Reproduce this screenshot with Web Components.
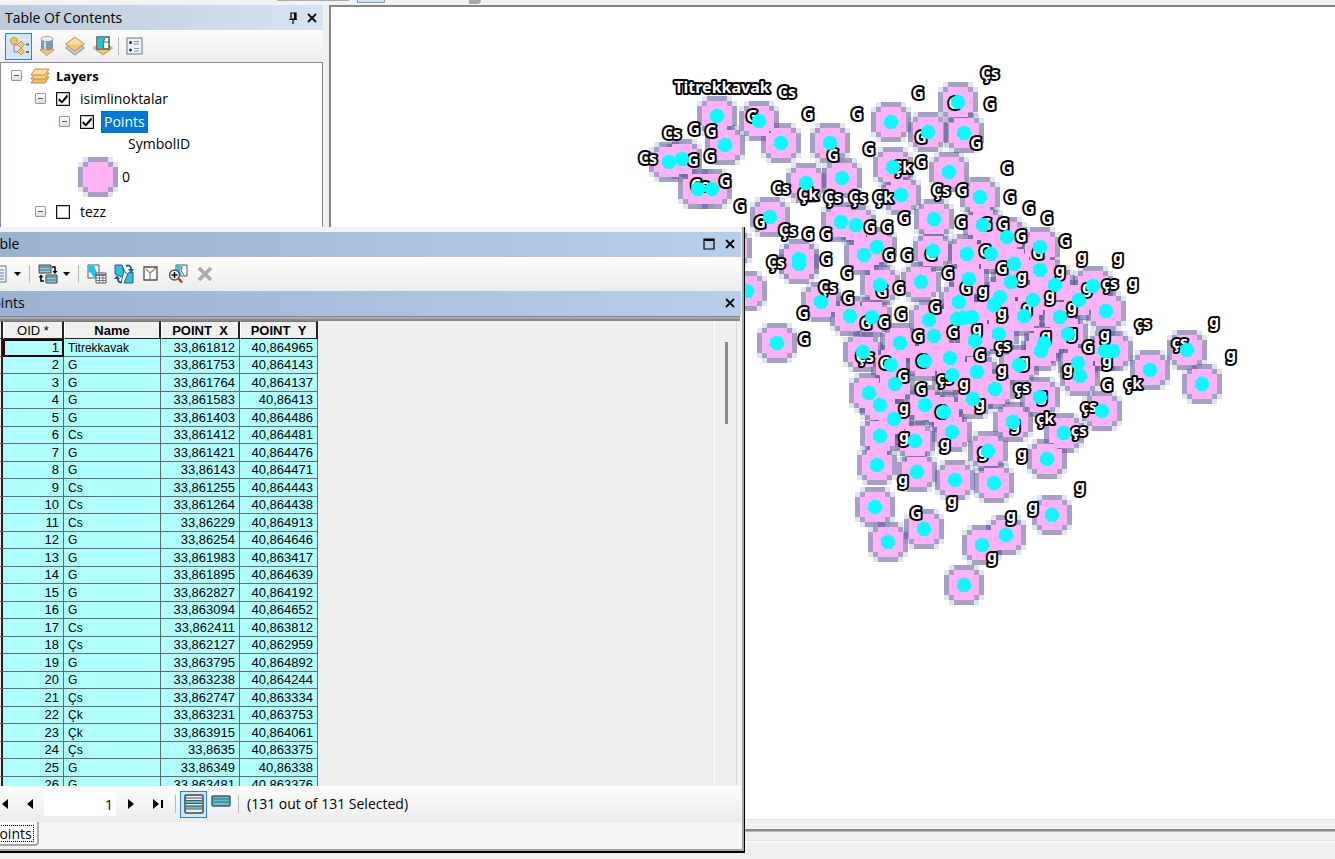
<!DOCTYPE html>
<html lang="en">
<head>
<meta charset="utf-8">
<title>Table Of Contents</title>
<style>
html,body{margin:0;height:100%;overflow:hidden}
body{font:14px/18px "Open Sans","Noto Sans",sans-serif;color:#000;background:#f0f0f0}
</style>
</head>
<body>
<gis-app></gis-app>
<script>
const define=(name,html,init)=>customElements.define(name,class extends HTMLElement{
  constructor(){super();const t=document.createElement('template');t.innerHTML=html;
    this.attachShadow({mode:'open'}).append(t.content.cloneNode(true));}
  connectedCallback(){if(init&&!this.ready){this.ready=true;init(this,this.shadowRoot);}}
});

/* ---------- icons ---------- */
const G='#f5c56b',GS='#b98634';
const ICONS={
 tree:[20,20,`<path d="M5 6v10h5M5 9h6" fill="none" stroke="#8a8a8a"/><circle cx="5" cy="5" r="3.500" fill="${G}" stroke="${GS}" stroke-width=".8"/><path d="M12 5l3.500 3.500-3.500 3.500-3.500-3.500zM12 12l3.500 3.500-3.500 3.500-3.500-3.500z" fill="${G}" stroke="${GS}" stroke-width=".8"/><path d="M17 8.500h3M17 16h3" stroke="#3c7a94" stroke-width="2"/>`],
 source:[20,20,`<path d="M10 9l7 5-7 5.500L3 14z" fill="${G}" stroke="${GS}" stroke-width=".8"/><path d="M4 3v9c0 3 12 3 12 0V3z" fill="#7f9ab5"/><path d="M7 4v9.500h2V4z" fill="#cfdeea"/><ellipse cx="10" cy="3" rx="6" ry="2.500" fill="#eef3f8" stroke="#8395a8" stroke-width=".8"/>`],
 vis:[20,20,`<path d="M10 5l9.500 7L10 19 .5 12z" fill="#c9c9c9" stroke="#777" stroke-width=".8"/><path d="M10 1l9.500 7L10 15 .5 8z" fill="${G}" stroke="${GS}" stroke-width=".8"/><path d="M10 2l8 6-8 1-8-1z" fill="#fbdc9d"/>`],
 sel:[20,20,`<path d="M10 5l9.500 7L10 19 .5 12z" fill="${G}" stroke="${GS}" stroke-width=".8"/><path d="M4 1h12v12H4z" fill="#fff" stroke="#555" stroke-width="1.500"/><path d="M4.500 1.500H12L10 7l1 5.500H4.500z" fill="#18c6e0"/><path d="M12 2l-2 5 1 6M11 6h5" fill="none" stroke="#555"/>`],
 list:[17,18,`<rect x="1" y="1" width="15" height="16" fill="#eef3fa" stroke="#69758c"/><path d="M8 4.500h5M8 7h5M8 11.500h5M8 14h5" stroke="#7d92ac"/><circle cx="4.500" cy="5.500" r="1.500" fill="#333"/><circle cx="4.500" cy="13" r="1.500" fill="#333"/>`],
 options:[17,18,`<rect x="1" y="1" width="15" height="16" fill="#eef3fa" stroke="#69758c"/><path d="M3 5h11M3 8h11M3 11h11M3 14h11" stroke="#5576a0"/>`],
 layers:[20,16,`<path d="M5 9h14l-4 6H1z" fill="#f0bd68" stroke="#c08c3c"/><path d="M5 5h14l-4 6H1z" fill="#f5cd86" stroke="#c08c3c"/><path d="M5 1h14l-4 6H1z" fill="#fbdda2" stroke="#c08c3c"/>`],
 pin:[10,12,`<path d="M3 1h5v6H3zM1 7.500h8M5 8v4" fill="none" stroke="#000" stroke-width="1.200"/><path d="M6 1h2v6H6z"/>`],
 close:[12,12,`<path d="M2 2l8 8M10 2l-8 8" stroke="#000" stroke-width="1.800"/>`],
 max:[12,12,`<path d="M1 1h10v10H1z" fill="none" stroke="#000" stroke-width="1.200"/><path d="M1 2h10" stroke="#000" stroke-width="2"/>`],
 down:[8,4,`<path d="M0 0h7L3.500 4z"/>`],
 relate:[20,20,`<path d="M1 1h12v8H1z" fill="#8ccbd8" stroke="#444"/><path d="M1 3h12M1 6h12" stroke="#4a6a72"/><path d="M8 11h11v8H8z" fill="#8ccbd8" stroke="#444"/><path d="M8 13h11M8 16h11" stroke="#4a6a72"/><path d="M14 3h3v5M6 17H3v-4" fill="none" stroke="#000" stroke-width="1.500"/><path d="M14.500 7h5L17 10zM.5 13.500h5L3 10.500z"/>`],
 selattr:[20,20,`<path d="M1 1h11v13H1z" fill="#fff" stroke="#555"/><path d="M1.500 1.500H7l2 5 2 7H7L4 9 1.500 8z" fill="#15c8ec"/><path d="M9 9h10v10H9z" fill="#fff" stroke="#555"/><path d="M9 10h10v2H9z" fill="#777"/><path d="M9 14h10M9 16.500h10M12.500 11v8M16 11v8" stroke="#777"/>`],
 switchsel:[20,20,`<path d="M1 1h18v18H7l-2-6-4-2z" fill="#fff"/><path d="M1 1h7l2 7-2 5-7-3zM14 9l5-1v11h-9z" fill="#15c8ec" stroke="#555"/><path d="M8 1l3 7 3 2M9 11l-2 8" stroke="#666" fill="none"/><path d="M12 2c3-1 5 0 5 3M8 18c-3 1-4-1-4-3" fill="none" stroke="#245c97" stroke-width="2"/><path d="M14 5h6l-3 4zM0 15h6l-3-4z" fill="#245c97"/>`],
 clearsel:[16,16,`<path d="M1 1h13v13H1z" fill="#fff" stroke="#4d4d4d" stroke-width="1.300"/><path d="M3 3l4 4v6M7 7l6-5" fill="none" stroke="#888" stroke-width="1.300"/>`],
 zoomsel:[20,20,`<path d="M8 1h11v11H8z" fill="#fff" stroke="#555"/><path d="M8.500 1.500H13L12 7l2 4.500H8.500z" fill="#15c8ec"/><path d="M14 2l-1 5 3 4" fill="none" stroke="#555"/><circle cx="6.500" cy="11" r="5" fill="#eef" stroke="#555" stroke-width="1.300"/><path d="M6.500 8v6M3.500 11h6" stroke="#111" stroke-width="1.500"/><path d="M10 14l4 4.500" stroke="#a2452c" stroke-width="2.500"/>`],
 del:[16,16,`<path d="M2 2l12 12M14 2L2 14" stroke="#a9a9a9" stroke-width="3.600"/>`],
 first:[14,10,`<path d="M12 0v10L6 5z"/><path d="M0 0h2v10H0z"/>`],
 prev:[6,10,`<path d="M6 0v10L0 5z"/>`],
 next:[6,10,`<path d="M0 0v10l6-5z"/>`],
 last:[12,10,`<path d="M1 0v10l6-5z"/><path d="M9 1h2v8H9z"/>`],
 all:[20,20,`<rect x="1" y="1" width="18" height="18" rx="1" fill="#e9eeee" stroke="#444" stroke-width="1.500"/><path d="M2 8h16M2 13h16" stroke="#5bbdcc" stroke-width="3"/><path d="M2 4h16M2 6.500h16M2 9.500h16M2 12h16M2 15h16" stroke="#555"/>`],
 only:[20,12,`<rect x="1" y="1" width="18" height="10" rx="1" fill="#61bccb" stroke="#3e5961" stroke-width="1.500"/><path d="M2 4h16M2 7h16" stroke="#3e6e7b"/>`]
};
define('gis-icon',`<style>:host{display:inline-flex;flex:none}svg{display:block}</style>`,(h,r)=>{
  const [w,hh,b]=ICONS[h.getAttribute('name')];
  r.innerHTML+=`<svg width="${w}" height="${hh}" viewBox="0 0 ${w} ${hh}" aria-hidden="true">${b}</svg>`;
});

define('tool-button',`<style>
:host{display:block;flex:none;width:27px;height:27px}
:host([narrow]){width:12px}
button{box-sizing:border-box;width:100%;height:100%;padding:0;border:1px solid transparent;background:none;display:flex;align-items:center;justify-content:center}
:host([on]) button{border:1px solid #2486d8;background:#d6e6f4}
</style><button type="button"></button>`,(h,r)=>{
  const b=r.querySelector('button');b.setAttribute('aria-label',h.getAttribute('label'));
  b.innerHTML=`<gis-icon name="${h.getAttribute('icon')}"></gis-icon>`;
});
define('tool-sep',`<style>:host{flex:none;display:flex;width:10px;height:18px;justify-content:center}i{width:1px;background:#b9b9b9}</style><i></i>`);

define('title-bar',`<style>
:host{display:flex;align-items:center;height:25px;background:linear-gradient(90deg,#bccbdb,#d5e3f2)}
:host([active]){background:linear-gradient(90deg,#9ab2d0,#b7cfea)}
span{flex:1;white-space:nowrap}
</style><span><slot></slot></span><slot name="actions"></slot>`);

/* ---------- contents panel ---------- */
define('tree-row',`<style>
:host{display:flex;align-items:center;height:23px;gap:10px}
.box{box-sizing:border-box;width:11px;height:11px;padding:0;border:1px solid #999;border-radius:1px;background:linear-gradient(#fff,#ddd);display:flex;align-items:center;justify-content:center}
.box i{width:5px;height:1px;background:#3b5ea8}
label{display:flex;align-items:center;gap:7px}
input{appearance:none;box-sizing:border-box;margin:0;width:14px;height:14px;border:1px solid #111;outline:1px solid #8888;outline-offset:-2px;background:#fff}
input:checked::before{content:"";display:block;width:12px;height:12px;background:#000;clip-path:polygon(15% 45%,40% 68%,86% 14%,90% 38%,42% 92%,12% 66%)}
span{padding:0 3px;line-height:22px}
:host([selected]) span{background:#0078d7;color:#fff}
:host([bold]){gap:8px}
:host([bold]) label{gap:3px}
:host([bold]) span{font-weight:700;font-size:13px}
</style><button class="box" type="button" aria-label="Collapse"><i></i></button><label><slot name="icon"></slot><span><slot></slot></span></label>`,(h,r)=>{
  if(h.hasAttribute('check')){
    const i=document.createElement('input');i.type='checkbox';i.checked=h.getAttribute('check')==='on';
    r.querySelector('label').prepend(i);
  }
});

const CELL=5;
const cells=(list)=>list.map(([x,y,w,h])=>`M${(x-4)*CELL} ${(y-4)*CELL}h${w*CELL}v${h*CELL}h${-w*CELL}z`).join('');
const DARK=cells([[2,0,4,1],[2,7,4,1],[0,2,1,4],[7,2,1,4],[1,1,1,1],[6,1,1,1],[1,6,1,1],[6,6,1,1]]);
const PALE=cells([[1,0,1,1],[6,0,1,1],[1,7,1,1],[6,7,1,1],[0,1,1,1],[7,1,1,1],[0,6,1,1],[7,6,1,1]]);
const PINK=cells([[2,1,4,1],[1,2,6,4],[2,6,4,1]]);
const EDGE=`<path d="${DARK}" fill="rgba(90,84,150,.55)"/><path d="${PALE}" fill="rgba(102,125,157,.2)"/>`;
const FILL=`<path d="${PINK}" fill="#ffb2f6"/>`;

define('toc-panel',`<style>
:host{display:flex;flex-direction:column;background:#f2f2f2}
title-bar{padding:0 5px}
.act{display:flex;gap:8px;align-items:center}
.act button{border:0;background:none;padding:0;display:flex}
.tools{display:flex;align-items:center;height:32px;padding-left:5px;gap:1px;background:linear-gradient(#fcfcfc,#ededed)}
.tools tool-sep{width:3px}
.tree{flex:1;border:1px solid #858b98;border-bottom:0;background:#fff;padding:1px 0 0 10px;overflow:hidden}
.l1{padding-left:24px}.l2{padding-left:48px}
.head{height:21px;line-height:21px;padding-left:117px}
.leg{display:flex;align-items:center;gap:4px;height:46px;padding-left:67px}
svg{display:block}
</style>
<title-bar>Table Of Contents<div class="act" slot="actions"><button aria-label="Auto hide"><gis-icon name="pin"></gis-icon></button><button aria-label="Close"><gis-icon name="close"></gis-icon></button></div></title-bar>
<div class="tools"><tool-button on icon="tree" label="List by drawing order"></tool-button><tool-button icon="source" label="List by source"></tool-button><tool-button icon="vis" label="List by visibility"></tool-button><tool-button icon="sel" label="List by selection"></tool-button><tool-sep></tool-sep><tool-button icon="list" label="Options"></tool-button></div>
<div class="tree">
<tree-row bold><gis-icon slot="icon" name="layers"></gis-icon>Layers</tree-row>
<tree-row class="l1" check="on">isimlinoktalar</tree-row>
<tree-row class="l2" check="on" selected>Points</tree-row>
<div class="head">SymbolID</div>
<div class="leg"><svg width="40" height="40" viewBox="-20 -20 40 40" shape-rendering="crispEdges">${EDGE}${FILL}</svg>0</div>
<tree-row class="l1" check="off">tezz</tree-row>
</div>`);

/* ---------- map ---------- */
const POINTS=`717,116 759,121 725,145 781,143 830,143 669,162 682,159 698,189 712,189 806,183 842,178 770,217 841,222 856,225 891,122 928,132 964,133 958,102 893,167 949,172 901,195 980,197 934,219 983,225 799,259 799,264 877,247 864,255 880,285 921,282 821,302 850,316 872,317 747,291 732,248 777,343 929,320 934,336 900,343 863,352 925,361 891,365 895,384 869,393 880,405 925,405 933,251 894,419 967,254 991,254 1007,237 1040,247 1014,264 1011,282 1040,270 969,279 1055,285 1000,297 994,305 959,302 1033,300 1024,316 1060,317 957,319 972,317 963,318 999,334 975,341 1068,334 1044,343 1041,351 950,358 1019,365 977,372 952,375 973,399 944,412 1093,286 1079,300 1106,311 1105,351 1113,351 1078,363 1080,376 1150,370 1187,350 1202,384 1102,411 877,465 880,436 915,441 952,432 917,472 955,480 995,389 1040,397 1013,422 1064,433 988,451 1047,459 994,483 1052,515 1006,535 982,545 964,585 875,507 924,529 888,542`.split(' ').map(p=>p.split(','));
const LABELS=`Titrekkavak,722,87 Cs,787,92 G,752,116 G,808,114 G,857,114 Cs,672,133 G,694,129 G,711,131 Cs,648,158 G,693,160 G,710,156 Cs,700,185 G,725,181 G,740,206 G,833,155 Cs,781,188 Çk,808,194 Çs,833,197 Çs,858,197 Çk,883,197 G,760,222 Çs,788,230 G,808,234 G,826,234 G,918,93 G,921,137 Çs,990,73 G,990,104 G,976,143 G,954,103 G,869,149 Çk,902,167 G,921,162 G,1007,168 Çs,941,190 G,962,190 G,1010,197 G,1029,208 G,1047,218 G,904,218 G,870,227 G,887,227 G,961,222 G,986,224 G,1003,224 Çs,776,262 G,826,259 G,847,273 Çs,828,287 G,848,298 G,803,313 G,882,291 G,899,288 G,889,255 G,907,255 G,931,254 G,866,323 G,884,322 G,901,314 G,804,339 Çs,865,356 G,885,363 G,903,376 G,921,389 G,918,336 G,935,307 G,922,361 g,904,409 G,1021,236 G,1065,241 G,985,251 G,1038,253 G,1002,268 g,1022,278 G,948,273 G,966,288 g,983,292 g,1002,314 g,1027,309 g,1060,272 g,1050,297 g,1072,308 G,953,332 g,977,330 çs,1003,345 G,980,355 g,1046,337 g,1072,334 g,1024,363 g,1002,371 g,1082,258 g,1118,259 g,1087,289 çs,1110,283 g,1133,284 çs,1143,323 g,1105,336 G,1088,347 g,1107,362 çk,1133,383 G,1107,385 çs,1180,342 g,1214,323 g,1231,356 çs,1089,406 g,1068,370 g,904,438 g,945,445 g,903,481 g,964,385 G,941,412 çs,945,378 g,980,405 çs,1022,387 g,1042,397 çk,1045,418 g,1015,426 çs,1079,430 g,983,453 g,1022,455 g,1080,488 g,1033,508 g,1011,517 g,992,558 G,916,513 g,952,502`.split(' ').map(p=>p.split(','));
define('map-view',`<style>
:host{display:block;min-width:0;overflow:hidden;background:#fff}
svg{display:block;width:100%;height:100%}
text{font:700 16px "Noto Sans","Open Sans",sans-serif;text-anchor:middle;fill:#fff;stroke:#000;stroke-width:4px;stroke-linejoin:round;paint-order:stroke}
</style><svg role="img" aria-label="Map of points"><g transform="translate(-331 -8)">
<g shape-rendering="crispEdges">${POINTS.map(([x,y])=>`<g transform="translate(${x} ${y})">${EDGE}</g>`).join('')}
${POINTS.map(([x,y])=>`<g transform="translate(${x} ${y})">${FILL}</g>`).join('')}</g>
<g>${LABELS.map(([t,x,y])=>`<text x="${x}" y="${+y+(t==='g'?4:6)}">${t}</text>`).join('')}</g>
<g fill="#0ff" stroke="#0ff" stroke-dasharray="3 3">${POINTS.map(([x,y])=>`<circle cx="${x}" cy="${y}" r="7"/>`).join('')}</g>
</g></svg>`);

/* ---------- attribute table ---------- */
const ROWS=`Titrekkavak 33,861812 40,864965
G 33,861753 40,864143
G 33,861764 40,864137
G 33,861583 40,86413
G 33,861403 40,864486
Cs 33,861412 40,864481
G 33,861421 40,864476
G 33,86143 40,864471
Cs 33,861255 40,864443
Cs 33,861264 40,864438
Cs 33,86229 40,864913
G 33,86254 40,864646
G 33,861983 40,863417
G 33,861895 40,864639
G 33,862827 40,864192
G 33,863094 40,864652
Cs 33,862411 40,863812
Çs 33,862127 40,862959
G 33,863795 40,864892
G 33,863238 40,864244
Çs 33,862747 40,863334
Çk 33,863231 40,863753
Çk 33,863915 40,864061
Çs 33,8635 40,863375
G 33,86349 40,86338
G 33,863481 40,863376`.split('\n').map(r=>r.split(' '));
define('data-grid',`<style>
:host{display:block;overflow:hidden;background:#efefef}
table{table-layout:fixed;width:342px;border-collapse:separate;border-spacing:0;font:13px/16px "Liberation Sans",Arial,sans-serif}
tbody tr{height:18px}tbody tr:nth-child(even){height:17px}
th,td{box-sizing:border-box;padding:0 4px;overflow:hidden;white-space:nowrap;border-right:1px solid #6a6a6a;border-bottom:1px solid #6a6a6a}
td{background:#b0ffff;text-align:right}
td:nth-child(3){text-align:left;font-size:12px}
thead th{height:18px;background:#f0f0f0;border-color:#222;border-right-width:2px;border-top:1px solid #777;border-left:1px solid #fff;line-height:14px;padding:2px 0}
thead th div{height:12px;overflow:hidden}
thead th:nth-child(2){font-weight:400}
tbody th{background:#f0f0f0;border-right:2px solid #222}
td.cur{outline:2px solid #300;outline-offset:-2px}
</style><table><colgroup><col style="width:27px"><col style="width:61px"><col style="width:97px"><col style="width:79px"><col style="width:78px"></colgroup>
<thead><tr><th></th><th><div>OID *</div></th><th><div>Name</div></th><th><div>POINT_X</div></th><th><div>POINT_Y</div></th></tr></thead>
<tbody>${ROWS.map(([n,x,y],i)=>`<tr><th></th><td${i?'':' class="cur"'}>${i+1}</td><td>${n}</td><td>${x}</td><td>${y}</td></tr>`).join('')}</tbody></table>`);

define('table-window',`<style>
:host{box-sizing:border-box;display:flex;flex-direction:column;background:#f3f3f3;border:solid #000;border-width:0 1px 2px 0;box-shadow:inset -2px -2px #a5a5a5;padding:5px 3px 2px 0}
title-bar{box-sizing:border-box;padding:0 5px 2px 8px}
.act{display:flex;gap:9px}
.act button{border:0;background:none;padding:0;display:flex}
.tools{display:flex;align-items:center;height:34px;padding-left:9px;background:linear-gradient(#fdfdfd,#ececec)}
.tools .up{height:31px}
.rule{height:5px;box-sizing:border-box;border:solid #888;border-width:1px 0 2px;background:#aaa;margin-right:1px}
.body{flex:1;min-height:0;display:flex;margin-right:4px;background:#efefef;border-right:1px solid #ddd}
data-grid{flex:1}
.scroll{box-sizing:border-box;width:22px;border-left:1px solid #fff;padding:21px 0 0 10px}
.scroll i{display:block;width:3px;height:82px;background:#8a8a8a}
.nav{display:flex;align-items:center;height:36px;padding-left:13px;background:linear-gradient(#fdfdfd,#ececec);white-space:nowrap}
.nav input{box-sizing:border-box;width:72px;height:24px;margin:0 1px;border:0;padding:0 3px 0 0;text-align:right;background:#fff;font:inherit}
.nav tool-sep{width:9px}.nav output{margin-left:4px}
.nav .up{height:22px;align-self:start;margin-top:4px}
.tabs{height:27px;display:flex;align-items:flex-start;background:#f5f5f5}
.tabs button{box-sizing:border-box;height:24px;padding:3px 3px 2px;border:1px solid #aaa;border-width:0 2px 2px 0;border-radius:0 0 4px 0;background:#fff;font:14px/15px "Open Sans","Noto Sans",sans-serif;color:#000;margin-left:10px}
.tabs span{display:block;border:1px dotted #000;padding:0 1px}
</style>
<title-bar active>Table<div class="act" slot="actions"><button aria-label="Maximize"><gis-icon name="max"></gis-icon></button><button aria-label="Close"><gis-icon name="close"></gis-icon></button></div></title-bar>
<div class="tools"><tool-button icon="options" label="Table options"></tool-button><tool-button narrow icon="down" label="Open table options"></tool-button><tool-sep></tool-sep><tool-button icon="relate" label="Related tables"></tool-button><tool-button narrow icon="down" label="Open related tables"></tool-button><tool-sep></tool-sep><tool-button icon="selattr" label="Select by attributes"></tool-button><tool-button icon="switchsel" label="Switch selection"></tool-button><tool-button class="up" icon="clearsel" label="Clear selection"></tool-button><tool-button icon="zoomsel" label="Zoom to selected"></tool-button><tool-button icon="del" label="Delete selected"></tool-button></div>
<title-bar active>Points<div class="act" slot="actions"><button aria-label="Close Points"><gis-icon name="close"></gis-icon></button></div></title-bar>
<div class="rule"></div>
<div class="body"><data-grid></data-grid><div class="scroll"><i></i></div></div>
<div class="nav"><tool-button icon="first" label="First"></tool-button><tool-button icon="prev" label="Previous"></tool-button><input type="text" value="1" aria-label="Record"><tool-button icon="next" label="Next"></tool-button><tool-button icon="last" label="Last"></tool-button><tool-sep></tool-sep><tool-button on icon="all" label="Show all records"></tool-button><tool-button class="up" icon="only" label="Show selected records"></tool-button><tool-sep></tool-sep><output>(131 out of 131 Selected)</output></div>
<div class="tabs"><button type="button"><span>Points</span></button></div>`);

define('gis-app',`<style>
:host{display:flex;flex-direction:column;height:100vh;position:relative;overflow:hidden;background:#f0f0f0}
.strip{height:5px;display:flex;background:#f2f2f2}
.strip i{height:1px;width:72px;margin-left:277px;background:#aaa}
.strip b{box-sizing:border-box;height:3px;width:28px;margin-left:8px;background:#cfe3f5;border:1px solid #8aa0b5;border-top:0}
.strip u{height:4px;width:12px;margin-left:84px;background:#aaa;border-radius:0 0 6px 2px}
.work{flex:1;min-height:0;display:flex;gap:6px}
toc-panel{width:323px;height:222px}
.map{flex:1;min-width:0;display:flex;border:solid #858585;border-width:2px 0 0 2px;border-bottom:1px solid #e0e0e0}
map-view{flex:1;padding-top:1px}
.foot{height:39px;box-sizing:border-box;margin-left:329px;padding-top:9px}
.foot i{display:block;height:2px;background:#8a8a8a;border-bottom:1px solid #bbb}
.foot b{display:block;height:1px;margin-top:8px;background:#e0e0e0;border-bottom:1px solid #fff}
table-window{position:absolute;left:-24px;top:227px;bottom:6px;width:769px}
</style>
<div class="strip"><i></i><b></b><u></u></div>
<div class="work"><toc-panel></toc-panel><div class="map"><map-view></map-view></div></div>
<div class="foot"><i></i><b></b></div>
<table-window></table-window>`);
</script>
</body>
</html>
